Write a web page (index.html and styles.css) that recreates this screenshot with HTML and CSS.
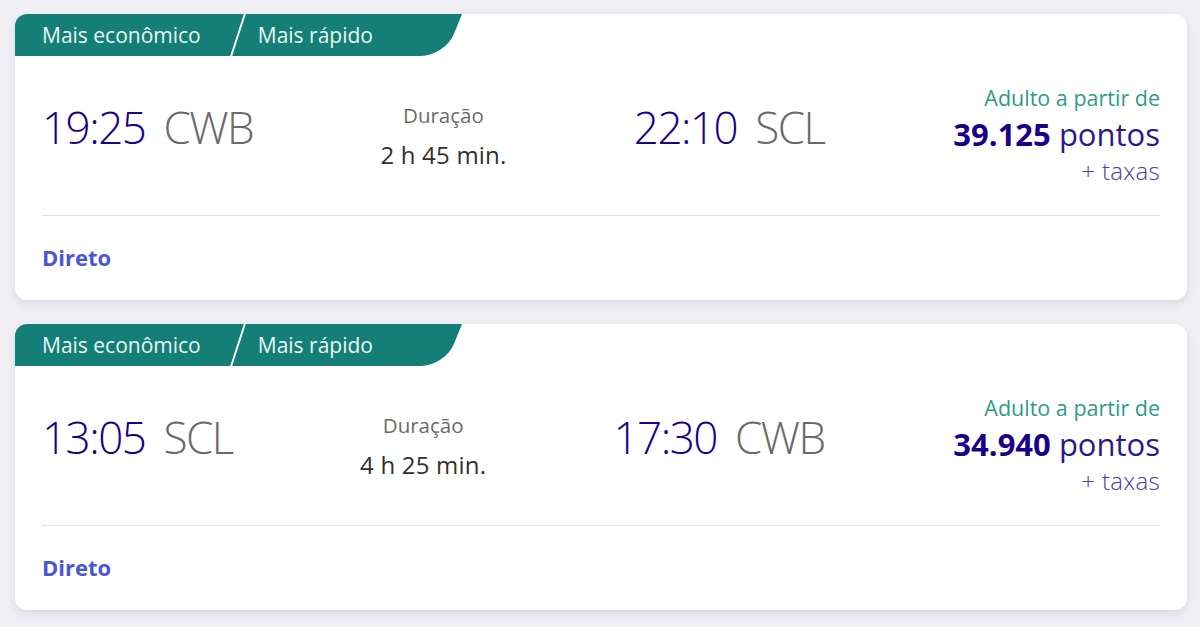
FILE: index.html
```html
<!DOCTYPE html>
<html lang="pt-BR">
<head>
<meta charset="utf-8">
<title>Voos</title>
<link rel="stylesheet" href="styles.css">
</head>
<body>
<div class="list">
  <article class="card">
    <div class="tabs">
      <span class="tab">Mais econômico</span>
      <span class="sep"></span>
      <span class="tab">Mais rápido</span>
    </div>
    <div class="main">
      <div class="times">
        <div class="point"><span class="hour">19:25</span><span class="iata">CWB</span></div>
        <div class="duration"><div class="dlabel">Duração</div><div class="dvalue">2 h 45 min.</div></div>
        <div class="point"><span class="hour">22:10</span><span class="iata">SCL</span></div>
      </div>
      <div class="price">
        <div class="plabel">Adulto a partir de</div>
        <div class="pvalue"><strong>39.125</strong> pontos</div>
        <div class="ptax">+ taxas</div>
      </div>
    </div>
    <div class="foot"><span class="direct">Direto</span></div>
  </article>
  <article class="card">
    <div class="tabs">
      <span class="tab">Mais econômico</span>
      <span class="sep"></span>
      <span class="tab">Mais rápido</span>
    </div>
    <div class="main">
      <div class="times">
        <div class="point"><span class="hour">13:05</span><span class="iata">SCL</span></div>
        <div class="duration"><div class="dlabel">Duração</div><div class="dvalue">4 h 25 min.</div></div>
        <div class="point"><span class="hour">17:30</span><span class="iata">CWB</span></div>
      </div>
      <div class="price">
        <div class="plabel">Adulto a partir de</div>
        <div class="pvalue"><strong>34.940</strong> pontos</div>
        <div class="ptax">+ taxas</div>
      </div>
    </div>
    <div class="foot"><span class="direct">Direto</span></div>
  </article>
</div>
</body>
</html>
```
FILE: styles.css
```css
* { box-sizing: border-box; }
html, body { margin: 0; padding: 0; }
body {
  background: #f0eff4;
  font-family: "Open Sans", "Noto Sans", sans-serif;
  width: 1200px;
  height: 627px;
  overflow: hidden;
}
.list {
  display: flex;
  flex-direction: column;
  gap: 24px;
  padding: 14px 13px 0 15px;
}
.card {
  background: #fff;
  border-radius: 12px;
  overflow: hidden;
  box-shadow: 0 4px 10px rgba(40, 30, 90, 0.10);
  height: 286px;
  padding: 0 27px;
  display: flex;
  flex-direction: column;
}
.tabs {
  align-self: flex-start;
  margin-left: -27px;
  width: 400px;
  height: 42px;
  display: flex;
  align-items: center;
  background: #137f77;
  padding-left: 27px;
  position: relative;
  color: #eaf5f3;
  font-size: 21px;
}
.tabs::after {
  content: "";
  position: absolute;
  top: 0;
  left: calc(100% - 8px);
  width: 55px;
  height: 42px;
  background: #137f77;
  transform: skewX(-22deg);
  transform-origin: top left;
  border-bottom-right-radius: 24px 22px;
}
.tab { line-height: 42px; white-space: nowrap; }
.sep {
  width: 2px;
  height: 42px;
  background: #ffffff;
  margin: 0 19px 0 36px;
  transform: skewX(-18deg);
}
.main {
  display: flex;
  align-items: flex-start;
  padding-top: 29px;
  height: 160px;
  border-bottom: 1px solid #e3e3e6;
}
.times {
  width: 70%;
  display: flex;
  justify-content: space-between;
  align-items: flex-start;
  margin-top: 17px;
}
.point { line-height: 50px; white-space: nowrap; }
.hour { font-size: 44px; font-weight: 300; color: #1b0088; letter-spacing: -1.5px; }
.iata { font-size: 44px; font-weight: 300; color: #6a6a6a; letter-spacing: -1.5px; margin-left: 18px; }
.duration { text-align: center; white-space: nowrap; }
.dlabel { font-size: 20.5px; line-height: 26px; color: #6b6b6b; }
.dvalue { font-size: 24px; line-height: 32px; color: #303030; margin-top: 11px; letter-spacing: 0.2px; }
.price {
  width: 30%;
  text-align: right;
  white-space: nowrap;
}
.plabel { font-size: 21.5px; line-height: 26px; color: #2e9b8b; }
.pvalue { font-size: 31px; line-height: 42px; margin-top: 2px; color: #2a1a8c; }
.pvalue strong { font-weight: 700; color: #1b0088; }
.ptax { font-size: 24px; line-height: 32px; font-weight: 300; color: #4b3ea0; letter-spacing: 0.3px; }
.foot { padding-top: 27px; }
.direct { font-size: 22px; line-height: 28px; font-weight: 700; color: #4c55d8; }
```
